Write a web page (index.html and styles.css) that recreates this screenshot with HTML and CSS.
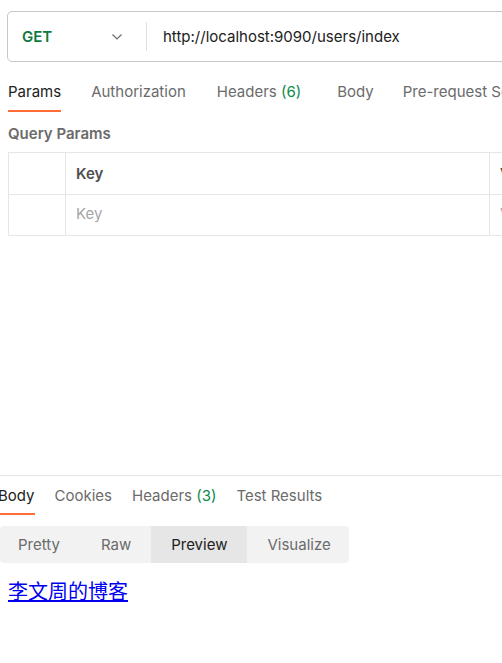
FILE: index.html
```html
<!DOCTYPE html>
<html lang="en">
<head>
<meta charset="utf-8">
<title>Request</title>
<link rel="stylesheet" href="styles.css">
</head>
<body>
<div class="app">
  <div class="urlbar">
    <div class="method">
      <span class="get">GET</span>
      <svg class="chev" width="12" height="8" viewBox="0 0 12 8"><path d="M1.5 1.5 L6 6 L10.5 1.5" fill="none" stroke="#6b6b6b" stroke-width="1.2"/></svg>
    </div>
    <div class="divider"></div>
    <div class="url">http://localhost:9090/users/index</div>
  </div>

  <nav class="tabs req-tabs">
    <span class="tab active">Params</span>
    <span class="tab">Authorization</span>
    <span class="tab">Headers <span class="count">(6)</span></span>
    <span class="tab">Body</span>
    <span class="tab">Pre-request Script</span>
  </nav>

  <div class="section-title">Query Params</div>

  <div class="table">
    <div class="row head">
      <div class="cell c1"></div>
      <div class="cell c2">Key</div>
      <div class="cell c3">Value</div>
    </div>
    <div class="row">
      <div class="cell c1"></div>
      <div class="cell c2 ph">Key</div>
      <div class="cell c3 ph">Value</div>
    </div>
  </div>

  <div class="response">
    <nav class="tabs res-tabs">
      <span class="tab active">Body</span>
      <span class="tab">Cookies</span>
      <span class="tab">Headers <span class="count">(3)</span></span>
      <span class="tab">Test Results</span>
    </nav>
    <div class="seg">
      <span class="seg-item">Pretty</span>
      <span class="seg-item">Raw</span>
      <span class="seg-item on">Preview</span>
      <span class="seg-item">Visualize</span>
    </div>
    <div class="preview"><a href="#">李文周的博客</a></div>
  </div>
</div>
</body>
</html>
```

FILE: styles.css
```css
html, body {
  margin: 0;
  padding: 0;
  background: #ffffff;
  overflow: hidden;
}
body {
  font-family: Inter, "Noto Sans", sans-serif;
  font-size: 15px;
  color: #212121;
  width: 502px;
  height: 663px;
}
.app {
  width: 502px;
  overflow: hidden;
}
.urlbar {
  margin: 11px 0 0 7px;
  width: 560px;
  height: 49px;
  border: 1px solid #c7c7c7;
  border-radius: 5px;
  display: flex;
  align-items: center;
}
.method {
  width: 138px;
  box-sizing: border-box;
  padding-left: 14px;
  padding-right: 23px;
  display: flex;
  align-items: center;
  justify-content: space-between;
}
.get {
  font-weight: 600;
  color: #0f7b3f;
  font-size: 15px;
}
.chev { display: block; }
.divider {
  width: 1px;
  height: 29px;
  background: #e0e0e0;
}
.url {
  padding-left: 16px;
  color: #212121;
  white-space: nowrap;
}
.tabs {
  display: flex;
  white-space: nowrap;
}
.tab {
  line-height: 20px;
  color: #6b6b6b;
  border-bottom: 2px solid transparent;
}
.tab.active {
  color: #212121;
  border-bottom-color: #ff6c37;
}
.count { color: #0b8a4a; }
.req-tabs {
  margin-top: 12px;
  padding-left: 8px;
  gap: 30px;
}
.req-tabs .tab { padding: 8px 0 8px; }
.req-tabs .tab:nth-child(3) { margin-left: 1px; }
.req-tabs .tab:nth-child(4) { margin-left: 6px; }
.req-tabs .tab:nth-child(5) { margin-left: -1px; }
.section-title {
  margin: 12px 0 0 8px;
  font-weight: 600;
  color: #6b6b6b;
  line-height: 20px;
}
.table {
  margin: 8px 0 0 8px;
  width: 560px;
  border-top: 1px solid #e6e6e6;
  border-left: 1px solid #e6e6e6;
}
.row {
  display: flex;
  height: 41px;
  border-bottom: 1px solid #e6e6e6;
}
.row + .row { height: 40px; }
.row + .row .cell { padding-bottom: 3px; }
.cell {
  box-sizing: border-box;
  border-right: 1px solid #e6e6e6;
  display: flex;
  align-items: center;
  padding-left: 10px;
}
.c1 { width: 57px; padding: 0; }
.c2 { width: 424px; }
.c3 { flex: 1; }
.head .cell { font-weight: 600; color: #505050; }
.ph { color: #a6a6a6; }
.response {
  margin-top: 239px;
  border-top: 1px solid #e6e6e6;
}
.res-tabs {
  gap: 20px;
  margin-left: -2px;
}
.res-tabs .tab { padding: 10px 0 7px; }
.seg {
  margin-top: 11px;
  width: 349px;
  height: 37px;
  background: #f2f2f2;
  border-radius: 4px;
  display: flex;
  overflow: hidden;
}
.seg-item {
  padding: 0 20px;
  line-height: 37px;
  color: #6b6b6b;
}
.seg-item:first-child { padding-left: 18px; }
.seg-item:nth-child(2) { padding-left: 21px; }
.seg-item.on {
  background: #e6e6e6;
  color: #212121;
}
.preview {
  padding: 14px 0 0 8px;
}
.preview a {
  font-family: "Noto Sans CJK SC", sans-serif;
  font-size: 20px;
  color: #0000ee;
  line-height: 28px;
}
```
